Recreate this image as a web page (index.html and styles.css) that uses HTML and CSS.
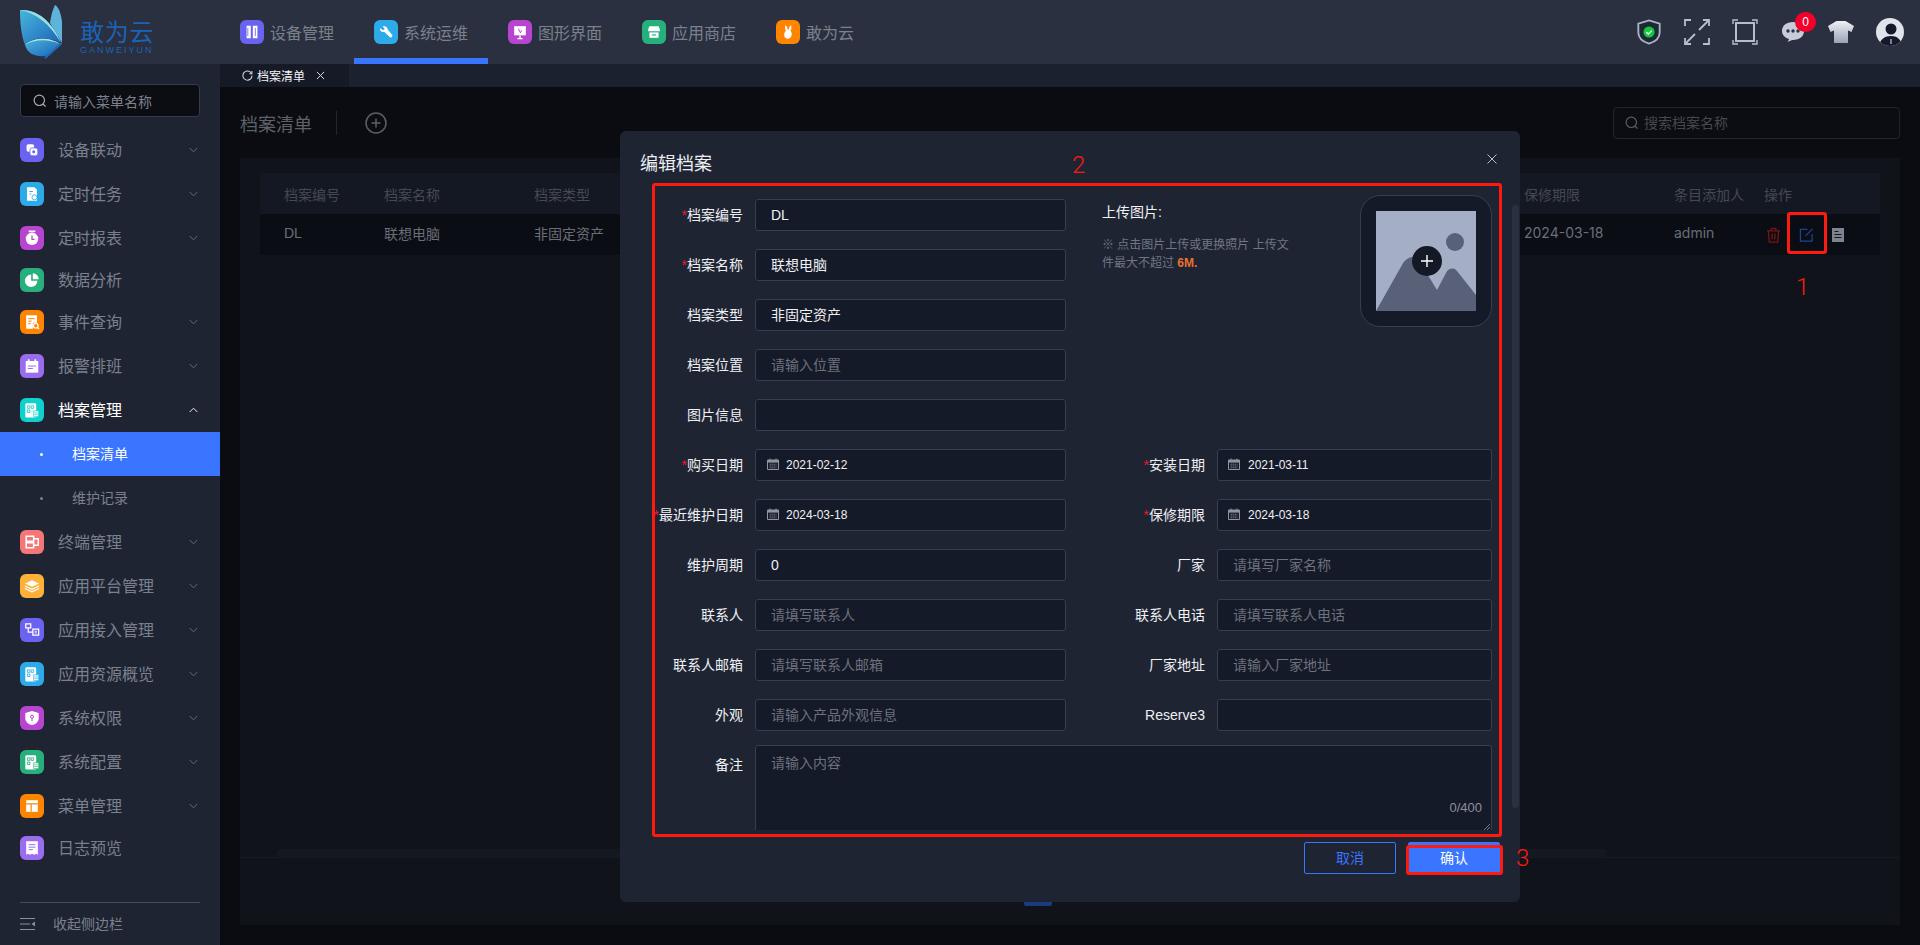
FILE: index.html
```html
<!DOCTYPE html>
<html lang="zh-CN">
<head>
<meta charset="utf-8">
<title>档案清单</title>
<link rel="stylesheet" href="styles.css">
</head>
<body>
<svg class="sprite" aria-hidden="true">
  <symbol id="chev" viewBox="0 0 10 6"><path d="M.7.7 5 5 9.3.7" fill="none" stroke="currentColor"/></symbol>
  <symbol id="chev-up" viewBox="0 0 10 6"><path d="M.7 5.3 5 1l4.3 4.3" fill="none" stroke="currentColor"/></symbol>
  <symbol id="search" viewBox="0 0 14 14"><circle cx="6.3" cy="6.3" r="5.2" fill="none" stroke="currentColor" stroke-width="1.2"/><path d="m10 10 2.6 2.6" stroke="currentColor" stroke-width="1.2"/></symbol>
  <symbol id="cal" viewBox="0 0 12 12"><path d="M.5 2h11v9.5H.5z" fill="none" stroke="currentColor"/><path d="M1 2h10v2.6H1z" fill="currentColor"/><path d="M3 .5v2M9 .5v2" stroke="currentColor"/><path d="M2.5 6.2h7M2.5 8h7M2.5 9.8h7" stroke="currentColor" stroke-width=".8" stroke-dasharray="1.4 .6"/></symbol>
  <symbol id="g-link" viewBox="0 0 24 24"><rect x="5.5" y="5" width="9" height="9" rx="2" fill="#fff"/><rect x="9.5" y="9.500" width="9.500" height="9.500" rx="2.500" fill="#fff" stroke="currentColor"/><circle cx="14" cy="14" r="1.800" fill="currentColor"/></symbol>
  <symbol id="g-doc" viewBox="0 0 24 24"><path d="M6 4h9l3 3v13H6z" fill="#fff"/><path d="M9 9h4M9 12h2" stroke="currentColor" stroke-width="1.300"/><circle cx="15" cy="16" r="3" fill="#fff" stroke="currentColor"/></symbol>
  <symbol id="g-clock" viewBox="0 0 24 24"><circle cx="12" cy="13" r="7.500" fill="#fff"/><path d="M12 9v4.500h3" fill="none" stroke="currentColor" stroke-width="1.500"/><path d="M8 4h8" stroke="#fff" stroke-width="2"/></symbol>
  <symbol id="g-pie" viewBox="0 0 24 24"><path d="M11 5.500a7.500 7.500 0 1 0 7.500 7.500H11z" fill="#fff"/><path d="M13 4v7h7a7 7 0 0 0-7-7z" fill="#fff"/></symbol>
  <symbol id="g-find" viewBox="0 0 24 24"><path d="M5 4h13v9h-5v7H5z" fill="#fff"/><path d="M7.500 8h8M7.500 11h4M7.500 14h3" stroke="currentColor" stroke-width="1.200"/><circle cx="16.500" cy="16.500" r="2.800" fill="none" stroke="#fff" stroke-width="1.500"/><path d="m18.500 18.500 2 2" stroke="#fff" stroke-width="1.500"/></symbol>
  <symbol id="g-sched" viewBox="0 0 24 24"><path d="M4.500 6h15v14h-15z" fill="#fff"/><path d="M8 4v4M16 4v4" stroke="#fff" stroke-width="2"/><path d="M7 12h10M7 15h6" stroke="currentColor" stroke-width="1.300"/></symbol>
  <symbol id="g-files" viewBox="0 0 24 24"><rect x="4" y="4" width="13" height="17" rx="1.500" fill="#fff"/><path d="M6.500 7h3v3h-3zM11 7h3v3h-3zM6.500 12h3v3h-3z" fill="none" stroke="currentColor" stroke-width="1"/><path d="M14 13h6v7h-6z" fill="#fff" stroke="currentColor" stroke-width=".8"/><path d="M15 15.500h4M15 17.500h4" stroke="currentColor" stroke-width=".8"/></symbol>
  <symbol id="g-term" viewBox="0 0 24 24"><path d="M5 5h9v6H5zM5 13h9v6H5z" fill="none" stroke="#fff" stroke-width="1.800"/><path d="M14 8h5.500v8H14" fill="none" stroke="#fff" stroke-width="1.800"/></symbol>
  <symbol id="g-layers" viewBox="0 0 24 24"><path d="m12 5 8.500 4-8.500 4-8.500-4z" fill="#fff"/><path d="m3.500 12 8.500 4 8.500-4M3.500 15l8.500 4 8.500-4" fill="none" stroke="#fff" stroke-width="1.600"/></symbol>
  <symbol id="g-flow" viewBox="0 0 24 24"><path d="M4.500 4.500h6v5h-6zM13 11h7v7h-7z" fill="none" stroke="#fff" stroke-width="1.500"/><path d="M7.500 9.500v5H13" fill="none" stroke="#fff" stroke-width="1.500"/><path d="M15 13.500h3M15 15.500h3" stroke="#fff"/></symbol>
  <symbol id="g-shield" viewBox="0 0 24 24"><path d="M12 3.500 20 6v6.500c0 4-3.500 6.700-8 8-4.500-1.300-8-4-8-8V6z" fill="#fff"/><circle cx="12" cy="10.500" r="1.800" fill="none" stroke="currentColor" stroke-width="1.200"/><path d="M12 12.500v3.500" stroke="currentColor" stroke-width="1.200"/></symbol>
  <symbol id="g-table" viewBox="0 0 24 24"><path d="M5 5h14v14H5z" fill="#fff"/><path d="M5 9.500h14M11 9.500V19" stroke="currentColor" stroke-width="1.400"/></symbol>
  <symbol id="g-log" viewBox="0 0 24 24"><path d="M5 4h14v16l-2-1.200-2.500 1.200-2.500-1.200-2.500 1.200L7 18.800 5 20z" fill="#fff"/><path d="M8 8h8M8 11h8M8 14h5" stroke="currentColor" stroke-width="1.200"/></symbol>
  <symbol id="g-books" viewBox="0 0 24 24"><path d="M5.500 4.500h5v15h-5zM13 4.500h5.500v15H13z" fill="#fff"/><path d="M7 7v10M16 7v10" stroke="currentColor"/></symbol>
  <symbol id="g-wrench" viewBox="0 0 24 24"><path d="M5 7.500 8.500 10l2-1.500L8 5.500c3-1.500 6 .5 6 3.500l5.500 6.500c1 1.500-1.500 4-3 2.500L10 12c-3 .5-6-1.500-5-4.500z" fill="#fff"/></symbol>
  <symbol id="g-screen" viewBox="0 0 24 24"><path d="M5 5h14v11H5z" fill="#fff"/><path d="M9 20h6M12 16v4" stroke="#fff" stroke-width="1.600"/><path d="M10 8l2.500 5 1.500-3" fill="none" stroke="currentColor" stroke-width="1.200"/></symbol>
  <symbol id="g-store" viewBox="0 0 24 24"><path d="M6.500 5h11l1.500 4v2H5V9z" fill="#fff"/><path d="M6.500 12.500h11V19h-11z" fill="#fff"/><path d="M9.500 15.500h5" stroke="currentColor" stroke-width="1.400"/></symbol>
  <symbol id="g-rabbit" viewBox="0 0 24 24"><path d="M9 4c1.500 1 2.500 3 2.500 5 .6-.2 1-.2 1.500 0 0-2 1-4 2.500-5 1 2.500.7 5-.5 6.500 1.500 2 2 4.500 1 6.500-.8 1.800-2.500 3-4.500 3S8 18.500 7.500 16.500c-.4-2.500.6-4.500 2-6C8.300 9 8 6.500 9 4z" fill="#fff"/></symbol>
  <linearGradient id="wing" x1="0" y1="0" x2="1" y2="1"><stop offset="0" stop-color="#48b6dd"/><stop offset="1" stop-color="#1b62b8"/></linearGradient>
</svg>

<div class="app">
  <header class="topbar">
    <div class="logo">
      <svg class="logo-mark" viewBox="0 0 62 60">
        <path d="M55 5c6 3 9 20 7 38L50 23c1-8 3-14 5-18z" fill="#5cb3dc"/>
        <path d="M20 10c16-1 32 10 41 33-15-7-28-6-36 2-4-10-5-24-5-35z" fill="url(#wing)"/>
        <path d="M20 10c16-1 32 10 41 33C50 24 36 13 20 10z" fill="#9adfe0"/>
        <path d="M25 45c10-9 27-7 35-1L50 55c-10 3-22 1-25-10z" fill="url(#wing)"/>
        <path d="M25 45c10-9 27-7 35-1-12-5-25-5-35 1z" fill="#a8e6dc"/>
        <path d="M62 43 45 58" stroke="#1f6ab8" stroke-width="2"/>
      </svg>
      <div class="logo-text">
        <div class="logo-cn">敢为云</div>
        <div class="logo-en">GANWEIYUN</div>
      </div>
    </div>
    <nav class="topnav">
      <a class="topnav-item"><span class="ico c-purple"><svg><use href="#g-books"/></svg></span>设备管理</a>
      <a class="topnav-item is-active"><span class="ico c-sky"><svg><use href="#g-wrench"/></svg></span>系统运维</a>
      <a class="topnav-item"><span class="ico c-magenta"><svg><use href="#g-screen"/></svg></span>图形界面</a>
      <a class="topnav-item"><span class="ico c-green"><svg><use href="#g-store"/></svg></span>应用商店</a>
      <a class="topnav-item"><span class="ico c-orange"><svg><use href="#g-rabbit"/></svg></span>敢为云</a>
    </nav>
    <div class="tools">
      <svg class="tool" viewBox="0 0 26 28"><path d="M13 1.500 24.500 5v9.500c0 6-5 10-11.500 12C6.500 24.500 1.500 20.500 1.500 14.500V5z" fill="#1d2a36" stroke="#aab2c4" stroke-width="2"/><circle cx="13" cy="14" r="6" fill="#12c93c"/><path d="m10 14 2.200 2.200L16 12.500" fill="none" stroke="#fff" stroke-width="1.400"/></svg>
      <svg class="tool" viewBox="0 0 26 26" fill="none" stroke="#b6bdcd" stroke-width="1.800"><path d="M1 7V1h6M25 19v6h-6M25 1 15 11M19 1h6v6M1 25l10-10M7 25H1v-6"/></svg>
      <svg class="tool" viewBox="0 0 26 26" fill="none" stroke="#b6bdcd"><path d="M4 4h18v18H4z" stroke-width="2"/><path d="M1 5V1h5M20 1h5v4M25 21v4h-5M6 25H1v-4" stroke-width="1.400"/></svg>
      <div class="chat">
        <svg class="tool" viewBox="0 0 26 26"><path d="M13 3c6.600 0 11 3.800 11 9s-4.400 9-11 9h-1c-1 .8-3 1.500-4.500 1.500 1-.8 1.500-1.800 1.500-2.500C5 18.800 2 15.800 2 12c0-5.200 4.400-9 11-9z" fill="#c7ccd8"/><circle cx="8" cy="12" r="1.700" fill="#2a3040"/><circle cx="13" cy="12" r="1.700" fill="#2a3040"/><circle cx="18" cy="12" r="1.700" fill="#2a3040"/></svg>
        <span class="badge">0</span>
      </div>
      <svg class="tool" viewBox="0 0 26 24"><defs><linearGradient id="shirt" x1="0" y1="0" x2="0" y2="1"><stop offset="0" stop-color="#eef0f5"/><stop offset="1" stop-color="#9aa3b6"/></linearGradient></defs><path d="M8.500 1h9L26 6l-2.500 6-3.500-1.500V23H6V10.500L2.500 12 0 6z" fill="url(#shirt)"/></svg>
      <svg class="avatar" viewBox="0 0 28 28"><defs><clipPath id="av"><circle cx="14" cy="14" r="14"/></clipPath></defs><g clip-path="url(#av)"><rect width="28" height="28" fill="#dfe3ea"/><circle cx="15" cy="11" r="5.500" fill="#141a2c"/><path d="M3 28c1-7 6-10 12-10s10 3 11 10z" fill="#141a2c"/><path d="M14.500 21h1v5h-1z" fill="#dfe3ea"/></g></svg>
    </div>
  </header>

  <div class="below">
    <aside class="sidebar">
      <div class="side-search"><svg class="side-search-ico"><use href="#search"/></svg>请输入菜单名称</div>
      <ul class="menu">
        <li class="menu-row"><span class="ico c-purple"><svg><use href="#g-link"/></svg></span><span class="menu-text">设备联动</span><svg class="chev"><use href="#chev"/></svg></li>
        <li class="menu-row"><span class="ico c-sky"><svg><use href="#g-doc"/></svg></span><span class="menu-text">定时任务</span><svg class="chev"><use href="#chev"/></svg></li>
        <li class="menu-row"><span class="ico c-magenta"><svg><use href="#g-clock"/></svg></span><span class="menu-text">定时报表</span><svg class="chev"><use href="#chev"/></svg></li>
        <li class="menu-row is-leaf"><span class="ico c-green"><svg><use href="#g-pie"/></svg></span><span class="menu-text">数据分析</span></li>
        <li class="menu-row"><span class="ico c-orange"><svg><use href="#g-find"/></svg></span><span class="menu-text">事件查询</span><svg class="chev"><use href="#chev"/></svg></li>
        <li class="menu-row"><span class="ico c-violet"><svg><use href="#g-sched"/></svg></span><span class="menu-text">报警排班</span><svg class="chev"><use href="#chev"/></svg></li>
        <li class="menu-row is-open"><span class="ico c-teal"><svg><use href="#g-files"/></svg></span><span class="menu-text">档案管理</span><svg class="chev"><use href="#chev-up"/></svg></li>
        <li class="sub-row is-active"><i class="dot"></i><span class="sub-text">档案清单</span></li>
        <li class="sub-row"><i class="dot"></i><span class="sub-text">维护记录</span></li>
        <li class="menu-row"><span class="ico c-coral"><svg><use href="#g-term"/></svg></span><span class="menu-text">终端管理</span><svg class="chev"><use href="#chev"/></svg></li>
        <li class="menu-row"><span class="ico c-amber"><svg><use href="#g-layers"/></svg></span><span class="menu-text">应用平台管理</span><svg class="chev"><use href="#chev"/></svg></li>
        <li class="menu-row"><span class="ico c-purple"><svg><use href="#g-flow"/></svg></span><span class="menu-text">应用接入管理</span><svg class="chev"><use href="#chev"/></svg></li>
        <li class="menu-row"><span class="ico c-sky"><svg><use href="#g-files"/></svg></span><span class="menu-text">应用资源概览</span><svg class="chev"><use href="#chev"/></svg></li>
        <li class="menu-row"><span class="ico c-magenta"><svg><use href="#g-shield"/></svg></span><span class="menu-text">系统权限</span><svg class="chev"><use href="#chev"/></svg></li>
        <li class="menu-row"><span class="ico c-green"><svg><use href="#g-files"/></svg></span><span class="menu-text">系统配置</span><svg class="chev"><use href="#chev"/></svg></li>
        <li class="menu-row"><span class="ico c-orange"><svg><use href="#g-table"/></svg></span><span class="menu-text">菜单管理</span><svg class="chev"><use href="#chev"/></svg></li>
        <li class="menu-row is-leaf"><span class="ico c-violet"><svg><use href="#g-log"/></svg></span><span class="menu-text">日志预览</span></li>
      </ul>
      <div class="collapse">
        <svg class="collapse-ico" viewBox="0 0 15 12"><path d="M0 .5h15M0 6h10M0 11.500h15" stroke="#8b909b"/><path d="M15 3.500v5L11.500 6z" fill="#8b909b"/></svg><span class="sub-text">收起侧边栏</span>
      </div>
    </aside>

    <main class="main">
      <div class="tabs">
        <div class="tab">
          <svg class="tab-ico" viewBox="0 0 12 12"><path d="M10.300 3.500A5 5 0 1 0 11 6" fill="none" stroke="#d8dbe2" stroke-width="1.100"/><path d="M10.800 1v3H8" fill="none" stroke="#d8dbe2" stroke-width="1.100"/></svg>
          档案清单
          <svg class="tab-x" viewBox="0 0 10 10"><path d="m1 1 8 8M9 1 1 9" stroke="#d8dbe2" stroke-width="1.100"/></svg>
        </div>
      </div>
      <div class="content">
        <div class="page-head">
          <h1 class="page-title">档案清单</h1>
          <span class="page-div"></span>
          <svg class="page-add" viewBox="0 0 22 22"><circle cx="11" cy="11" r="10" fill="none" stroke="#5c5f66" stroke-width="1.500"/><path d="M11 6.500v9M6.500 11h9" stroke="#5c5f66" stroke-width="1.500"/></svg>
          <div class="page-search"><svg class="page-search-ico"><use href="#search"/></svg><span class="sub-text">搜索档案名称</span></div>
        </div>
        <section class="panel">
          <div class="table">
            <div class="tr th">
              <span>档案编号</span><span>档案名称</span><span>档案类型</span><span>保修期限</span><span>条目添加人</span><span>操作</span>
            </div>
            <div class="tr td">
              <span>DL</span><span>联想电脑</span><span>非固定资产</span><span class="lat">2024-03-18</span><span class="lat">admin</span>
              <span class="acts">
                <svg class="act" viewBox="0 0 16 17" fill="none" stroke="#7a1414" stroke-width="1.400"><path d="M1 4h14M5.500 4V1.500h5V4M2.500 4l1 12h9l1-12M6.500 7v6M9.500 7v6"/></svg>
                <svg class="act" viewBox="0 0 16 16" fill="none" stroke="#1f4396" stroke-width="1.300"><path d="M9 2H1.500v12.500H14V7"/><path d="m7 9 7.500-7.500"/></svg>
                <svg class="act act-doc" viewBox="0 0 12 14"><path d="M0 0h12v14H0z" fill="#7d838f"/><path d="M2.500 3.500h4M2.500 6.500h7M2.500 9.500h7" stroke="#141720" stroke-width="1.200"/></svg>
              </span>
            </div>
          </div>
          <div class="hscroll"></div>
          <div class="pager"><span class="pager-btn"></span></div>
        </section>
      </div>

      <div class="overlay">
        <div class="modal">
          <div class="modal-head">
            <h2 class="modal-title">编辑档案</h2>
            <svg class="modal-close" viewBox="0 0 10 10"><path d="m.5.500 9 9M9.500.500l-9 9" stroke="#b9bec9"/></svg>
          </div>
          <div class="modal-body">
            <div class="form-top">
              <div>
                <div class="field"><label class="label"><b>*</b>档案编号</label><div class="input">DL</div></div>
                <div class="field"><label class="label"><b>*</b>档案名称</label><div class="input">联想电脑</div></div>
                <div class="field"><label class="label">档案类型</label><div class="input">非固定资产</div></div>
                <div class="field"><label class="label">档案位置</label><div class="input is-ph">请输入位置</div></div>
                <div class="field"><label class="label">图片信息</label><div class="input"></div></div>
              </div>
              <div class="upload-cell">
                <div class="upload-text">
                  <div class="upload-title">上传图片:</div>
                  <p class="upload-hint">※ 点击图片上传或更换照片 上传文<br>件最大不超过 <em>6M.</em></p>
                </div>
                <div class="upload">
                  <div class="upload-img">
                    <svg viewBox="0 0 100 100"><circle cx="79" cy="31" r="9" fill="#586178"/><path d="M0 100 26 54c3-6 10-11 16-6l19 31 9-17c2-5 8-6 11-2l19 24v16z" fill="#586178"/></svg>
                    <span class="upload-plus"><svg viewBox="0 0 12 12"><path d="M6 0v12M0 6h12" stroke="#fff" stroke-width="1.400"/></svg></span>
                  </div>
                </div>
              </div>
            </div>
            <div class="form-grid">
              <div class="field"><label class="label"><b>*</b>购买日期</label><div class="input is-date"><svg class="cal"><use href="#cal"/></svg>2021-02-12</div></div>
              <div class="field is-r"><label class="label"><b>*</b>安装日期</label><div class="input is-date"><svg class="cal"><use href="#cal"/></svg>2021-03-11</div></div>
              <div class="field"><label class="label"><b>*</b>最近维护日期</label><div class="input is-date"><svg class="cal"><use href="#cal"/></svg>2024-03-18</div></div>
              <div class="field is-r"><label class="label"><b>*</b>保修期限</label><div class="input is-date"><svg class="cal"><use href="#cal"/></svg>2024-03-18</div></div>
              <div class="field"><label class="label">维护周期</label><div class="input">0</div></div>
              <div class="field is-r"><label class="label">厂家</label><div class="input is-ph">请填写厂家名称</div></div>
              <div class="field"><label class="label">联系人</label><div class="input is-ph">请填写联系人</div></div>
              <div class="field is-r"><label class="label">联系人电话</label><div class="input is-ph">请填写联系人电话</div></div>
              <div class="field"><label class="label">联系人邮箱</label><div class="input is-ph">请填写联系人邮箱</div></div>
              <div class="field is-r"><label class="label">厂家地址</label><div class="input is-ph">请输入厂家地址</div></div>
              <div class="field"><label class="label">外观</label><div class="input is-ph">请输入产品外观信息</div></div>
              <div class="field is-r"><label class="label">Reserve3</label><div class="input"></div></div>
            </div>
            <div class="field is-area">
              <label class="label">备注</label>
              <div class="textarea is-ph">请输入内容
                <span class="counter">0/400</span>
                <svg class="grip" viewBox="0 0 6 6"><path d="M6 0 0 6M6 3 3 6" stroke="#8b909b" stroke-width=".8"/></svg>
              </div>
            </div>
          </div>
          <div class="modal-foot">
            <button class="btn btn-ghost">取消</button>
            <button class="btn btn-primary">确认</button>
          </div>
          <div class="modal-scroll"></div>
        </div>
      </div>
    </main>
  </div>

  <div class="mark mark-1"></div><span class="mark-n n-1">1</span>
  <div class="mark mark-2"></div><span class="mark-n n-2">2</span>
  <div class="mark mark-3"></div><span class="mark-n n-3">3</span>
</div>
</body>
</html>
```

FILE: styles.css
```css
* { box-sizing: border-box; }
html, body { margin: 0; height: 100%; }
body {
  font-family: "Liberation Sans", "Noto Sans CJK SC", sans-serif;
  font-size: 14px;
  background: #0a0c11;
  color: #e8eaee;
  overflow: hidden;
}
ul { list-style: none; margin: 0; padding: 0; }
h1, h2, p { margin: 0; font-weight: 400; }
.sprite { position: absolute; width: 0; height: 0; }

.app { position: relative; display: flex; flex-direction: column; height: 100vh; }

/* top bar */
.topbar { display: flex; height: 64px; flex: none; background: #2a3040; }
.logo { width: 220px; flex: none; display: flex; }
.logo-mark { width: 62px; height: 60px; flex: none; }
.logo-text { margin-left: 18px; padding-top: 19px; color: #1a63b5; }
.logo-cn { font-size: 24px; line-height: 27px; letter-spacing: .7px; }
.logo-en { font-size: 9px; line-height: 9px; letter-spacing: 2px; white-space: nowrap; }
.topnav { display: flex; }
.topnav-item {
  display: flex; align-items: center; gap: 6px;
  padding: 6px 20px 0;
  font-size: 16px; color: #7b818b;
  border-bottom: 6px solid transparent;
  height: 64px;
}
.topnav-item.is-active { border-bottom-color: #3a75ff; }
.ico { display: block; width: 24px; height: 24px; border-radius: 6px; flex: none; padding: 2px; }
.ico svg { display: block; width: 20px; height: 20px; }
.c-purple { background: #6a63f0; color: #6a63f0; }
.c-sky { background: #2dabe8; color: #2dabe8; }
.c-magenta { background: #b845d0; color: #b845d0; }
.c-green { background: #28b07c; color: #28b07c; }
.c-orange { background: #ff8500; color: #ff8500; }
.c-violet { background: #9a6cf0; color: #9a6cf0; }
.c-teal { background: #0fd0cc; color: #0fd0cc; }
.c-coral { background: #f47676; color: #f47676; }
.c-amber { background: #ffb038; color: #ffb038; }

.tools { margin-left: auto; display: flex; align-items: center; gap: 22px; padding-right: 16px; }
.tool { display: block; width: 26px; height: 26px; }
.chat { position: relative; width: 26px; height: 26px; }
.badge {
  position: absolute; left: 15px; top: -7px; width: 21px; height: 20px; border-radius: 10px;
  background: #f5002a; color: #fff; font-size: 12px; line-height: 20px; text-align: center;
}
.avatar { display: block; width: 28px; height: 28px; }

.below { flex: 1; display: flex; min-height: 0; }

/* sidebar */
.sidebar { width: 220px; flex: none; background: #1f2433; padding-top: 20px; display: flex; flex-direction: column; color: #7a818c; }
.side-search {
  margin: 0 20px 11px; height: 33px; border: 1px solid #343b4f; border-radius: 4px;
  background: #0b0d13; display: flex; align-items: center; padding-left: 12px; gap: 7px; color: #7c828d;
}
.side-search-ico { width: 14px; height: 14px; color: #a8adb8; }
.menu-row { display: flex; align-items: center; height: 44px; padding-left: 20px; font-size: 16px; }
.menu-row.is-leaf { height: 40px; }
.menu-text { margin-left: 14px; padding-bottom: 2px; }
.sub-text { padding-bottom: 2px; }
.chev { width: 9px; height: 6px; margin-left: auto; margin-right: 22px; color: #6a7080; }
.is-open { color: #fff; }
.is-open .chev { color: #fff; }
.sub-row { display: flex; align-items: center; height: 44px; padding-left: 40px; color: #7a818c; }
.sub-row.is-active { background: #3a75ff; color: #fff; }
.dot { width: 3px; height: 3px; border-radius: 50%; background: currentColor; margin-right: 29px; }
.collapse {
  margin: auto 20px 0; height: 43px; border-top: 1px solid #454b5c;
  display: flex; align-items: center; gap: 18px; color: #7a818c;
}
.collapse-ico { width: 15px; height: 12px; }

/* main */
.main { flex: 1; min-width: 0; display: flex; flex-direction: column; position: relative; }
.tabs { height: 23px; flex: none; background: #1c2130; display: flex; }
.tab {
  width: 129px; background: #161a27; display: flex; align-items: center;
  padding-left: 22px; font-size: 12px; color: #f2f3f6;
}
.tab-ico { width: 11px; height: 11px; margin-right: 4px; }
.tab-x { width: 9px; height: 9px; margin-left: 11px; }

.content { flex: 1; min-height: 0; display: flex; flex-direction: column; padding: 0 20px 20px; background: #0a0c11; }
.page-head { height: 71px; flex: none; display: flex; align-items: center; }
.page-title { font-size: 18px; color: #5e6168; }
.page-div { width: 1px; height: 24px; background: #24272f; margin-left: 24px; }
.page-add { width: 22px; height: 22px; margin-left: 28px; }
.page-search {
  margin-left: auto; width: 287px; height: 32px; border: 1px solid #20242f; border-radius: 4px;
  display: flex; align-items: center; padding-left: 11px; gap: 5px; color: #45484f; background: #0b0d13;
}
.page-search-ico { width: 14px; height: 14px; color: #5a5e66; }

.panel { flex: 1; min-height: 0; background: #10131a; display: flex; flex-direction: column; }
.table { margin: 15px 20px 0; flex: 1; }
.tr {
  display: grid; grid-template-columns: 100px 150px 990px 150px 90px 1fr;
  padding-left: 24px; height: 41px; align-items: center;
}
.th { background: #141823; color: #464951; }
.td { background: #0a0d14; color: #6a6e77; padding-bottom: 4px; }
.lat { font-family: Inter, "Liberation Sans", sans-serif; }
.acts { display: flex; align-items: center; gap: 18px; padding-left: 2px; margin-top: 4px; }
.act { width: 15px; height: 16px; display: block; }
.act-doc { width: 12px; height: 14px; }
.hscroll { width: 1330px; height: 8px; margin-left: 37px; background: #141820; border-radius: 4px; flex: none; }
.pager { height: 68px; flex: none; border-top: 1px solid #161a24; padding: 19px 0 0 784px; }
.pager-btn { display: block; width: 28px; height: 29px; background: #1b3a80; border-radius: 2px; }

/* modal */
.overlay { position: absolute; inset: 23px 0 0 0; display: flex; justify-content: center; align-items: flex-start; pointer-events: none; }
.modal {
  position: relative; width: 900px; height: 771px; margin-top: 44px;
  background: #1f2433; border-radius: 6px; padding: 0 20px;
}
.modal-head { height: 52px; display: flex; align-items: center; padding-top: 10px; }
.modal-title { font-size: 18px; color: #eceef2; }
.modal-close { width: 10px; height: 10px; margin-left: auto; margin-right: 3px; margin-top: -6px; }
.modal-body { width: 852px; height: 647px; overflow: hidden; padding-top: 16px; }
.form-top { display: grid; grid-template-columns: 426px 426px; }
.field { display: flex; height: 32px; margin-bottom: 18px; }
.label { flex: none; width: 103px; margin-right: 12px; text-align: right; line-height: 32px; color: #eef0f4; white-space: nowrap; }
.label b { color: #f5162a; font-weight: 400; }
.is-r .label { width: 139px; }
.input {
  flex: 1; height: 32px; border: 1px solid #363e55; border-radius: 3px; background: #151a28;
  line-height: 30px; padding-left: 15px; color: #eef0f4;
}
.is-ph { color: #6c717c; }
.is-date { padding-left: 11px; font-size: 12px; display: flex; align-items: center; }
.is-date .cal { width: 12px; height: 12px; color: #9095a1; margin-right: 7px; margin-top: -3px; }
.is-r .is-date { padding-left: 10px; }
.is-r .is-date .cal { margin-right: 8px; }

.upload-cell { display: flex; padding-left: 36px; height: 250px; }
.upload-text { width: 258px; flex: none; padding-top: 3px; }
.upload-title { line-height: 20px; color: #f2f3f6; }
.upload-hint { font-size: 12px; line-height: 18px; margin-top: 14px; color: #6f7684; white-space: nowrap; }
.upload-hint em { font-style: normal; font-weight: 700; color: #e9702c; }
.upload {
  width: 132px; height: 132px; border: 1px solid #363e55; border-radius: 20px; background: #151a28;
  margin-top: -4px; padding: 15px; flex: none;
}
.upload-img { position: relative; width: 100px; height: 100px; background: #a4aec4; }
.upload-img > svg { display: block; width: 100px; height: 100px; }
.upload-plus {
  position: absolute; left: 36px; top: 35px; width: 30px; height: 30px; border-radius: 50%;
  background: #141926; display: flex; align-items: center; justify-content: center;
}
.upload-plus svg { width: 12px; height: 12px; }

.form-grid { display: grid; grid-template-columns: 426px 426px; row-gap: 18px; margin-bottom: 14px; }
.form-grid .field { margin-bottom: 0; }
.is-area { height: auto; margin: 0; }
.is-area .label { line-height: 20px; padding-top: 10px; }
.textarea {
  position: relative; flex: 1; height: 120px; border: 1px solid #363e55; border-radius: 3px; background: #151a28;
  padding: 7px 15px; line-height: 20px;
}
.counter { position: absolute; right: 9px; top: 53px; font-size: 13px; line-height: 18px; color: #8b909b; }
.grip { position: absolute; right: 1px; top: 78px; width: 6px; height: 6px; }

.modal-foot { display: flex; justify-content: flex-end; gap: 12px; padding-top: 12px; width: 860px; }
.btn { width: 92px; height: 32px; font: inherit; border-radius: 2px; border: 1px solid #3a75ff; padding-bottom: 3px; }
.btn-ghost { background: transparent; color: #3a75ff; }
.btn-primary { background: #3a75ff; color: #fff; }
.modal-scroll { position: absolute; left: 892px; top: 74px; width: 7px; height: 603px; background: #2a3040; border-radius: 4px; }

/* annotations */
.mark { position: absolute; border: 3px solid #ff1a0f; border-radius: 3px; pointer-events: none; }
.mark-1 { left: 1787px; top: 212px; width: 40px; height: 42px; }
.mark-2 { left: 652px; top: 183px; width: 850px; height: 654px; }
.mark-3 { left: 1406px; top: 845px; width: 97px; height: 30px; }
.mark-n { position: absolute; color: #ff1a0f; font-family: Roboto, "Liberation Sans", sans-serif; font-weight: 300; font-size: 24px; line-height: 24px; }
.n-1 { left: 1796px; top: 275px; }
.n-2 { left: 1072px; top: 153px; }
.n-3 { left: 1516px; top: 846px; }
```
